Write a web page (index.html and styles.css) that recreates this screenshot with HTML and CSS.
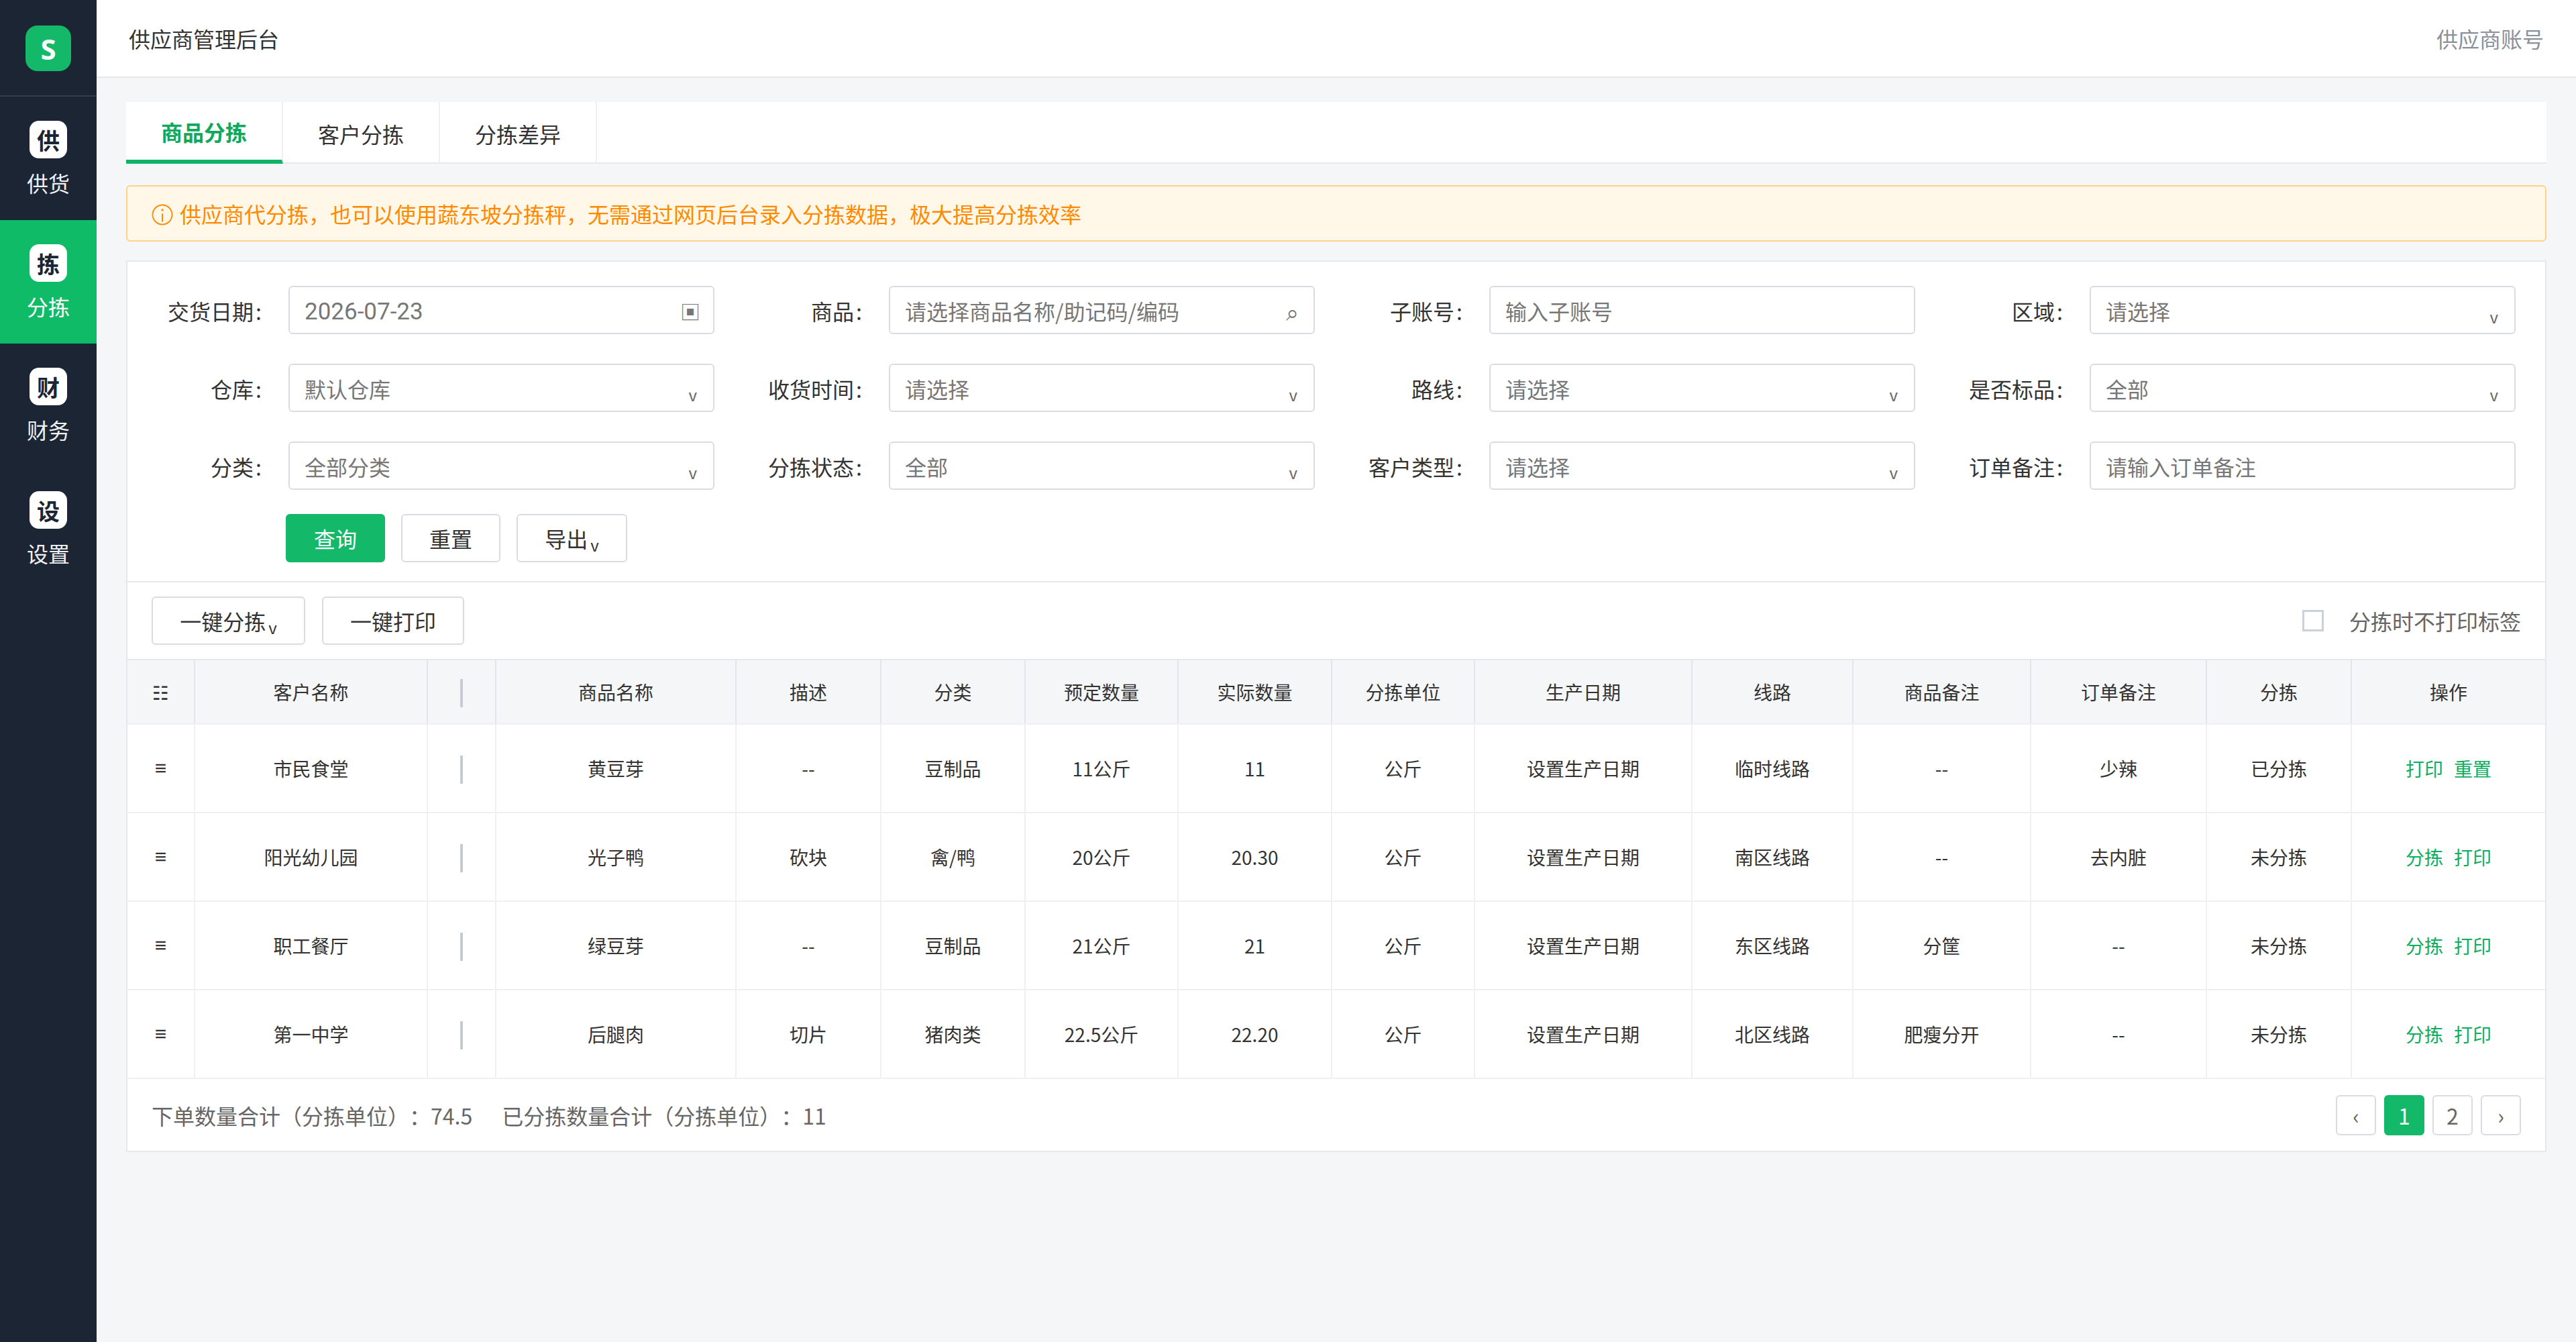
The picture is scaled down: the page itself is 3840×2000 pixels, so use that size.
FILE: index.html
```html
<!DOCTYPE html>
<html lang="zh-CN">
<head>
<meta charset="utf-8">
<title>供应商管理后台</title>
<link rel="stylesheet" href="styles.css">
</head>
<body>
<div class="app">
  <aside class="side">
    <div class="brand"><div class="logo">S</div></div>
    <a class="nav"><span class="nav-ic">供</span><span class="nav-t">供货</span></a>
    <a class="nav on"><span class="nav-ic">拣</span><span class="nav-t">分拣</span></a>
    <a class="nav"><span class="nav-ic">财</span><span class="nav-t">财务</span></a>
    <a class="nav"><span class="nav-ic">设</span><span class="nav-t">设置</span></a>
  </aside>
  <div class="main">
    <header class="top"><span class="top-t">供应商管理后台</span><span class="top-a">供应商账号</span></header>
    <div class="content">
      <nav class="tabs">
        <a class="tab on">商品分拣</a><a class="tab">客户分拣</a><a class="tab">分拣差异</a>
      </nav>
      <div class="alert">
        <svg class="ai" viewBox="0 0 32 32" width="32" height="32" aria-hidden="true">
          <circle cx="16" cy="16" r="14.5" fill="none" stroke="currentColor" stroke-width="1.8"/>
          <rect x="15" y="14.5" width="2" height="12" fill="currentColor"/>
          <rect x="14.6" y="7.5" width="2.8" height="3" fill="currentColor"/>
        </svg>
        <span>供应商代分拣，也可以使用蔬东坡分拣秤，无需通过网页后台录入分拣数据，极大提高分拣效率</span>
      </div>
      <section class="card">
        <div class="filters">
          <div class="grid">
            <label class="f"><span class="l">交货日期<span class="cl">:</span></span><span class="i"><span class="date">2026-07-23</span><span class="g-date">▣</span></span></label>
            <label class="f"><span class="l">商品<span class="cl">:</span></span><span class="i"><span>请选择商品名称/助记码/编码</span><span class="g-search">⌕</span></span></label>
            <label class="f"><span class="l">子账号<span class="cl">:</span></span><span class="i"><span>输入子账号</span></span></label>
            <label class="f"><span class="l">区域<span class="cl">:</span></span><span class="i"><span>请选择</span><span class="caret">v</span></span></label>
            <label class="f"><span class="l">仓库<span class="cl">:</span></span><span class="i"><span>默认仓库</span><span class="caret">v</span></span></label>
            <label class="f"><span class="l">收货时间<span class="cl">:</span></span><span class="i"><span>请选择</span><span class="caret">v</span></span></label>
            <label class="f"><span class="l">路线<span class="cl">:</span></span><span class="i"><span>请选择</span><span class="caret">v</span></span></label>
            <label class="f"><span class="l">是否标品<span class="cl">:</span></span><span class="i"><span>全部</span><span class="caret">v</span></span></label>
            <label class="f"><span class="l">分类<span class="cl">:</span></span><span class="i"><span>全部分类</span><span class="caret">v</span></span></label>
            <label class="f"><span class="l">分拣状态<span class="cl">:</span></span><span class="i"><span>全部</span><span class="caret">v</span></span></label>
            <label class="f"><span class="l">客户类型<span class="cl">:</span></span><span class="i"><span>请选择</span><span class="caret">v</span></span></label>
            <label class="f"><span class="l">订单备注<span class="cl">:</span></span><span class="i"><span>请输入订单备注</span></span></label>
          </div>
          <div class="acts">
            <button class="b pri w148">查询</button>
            <button class="b w148">重置</button>
            <button class="b w165">导出<span class="bc">v</span></button>
          </div>
        </div>
        <div class="bar">
          <div class="bar-l">
            <button class="b w229">一键分拣<span class="bc">v</span></button>
            <button class="b w212">一键打印</button>
          </div>
          <label class="chk"><span class="box"></span><span>分拣时不打印标签</span></label>
        </div>
        <table class="t">
          <colgroup>
            <col class="c1"><col class="c2"><col class="c3"><col class="c4"><col class="c5"><col class="c6"><col class="c7"><col class="c8"><col class="c9"><col class="c10"><col class="c11"><col class="c12"><col class="c13"><col class="c14"><col class="c15">
          </colgroup>
          <thead>
            <tr><th><span class="hd">☷</span></th><th>客户名称</th><th><span class="rs"></span></th><th>商品名称</th><th>描述</th><th>分类</th><th>预定数量</th><th>实际数量</th><th>分拣单位</th><th>生产日期</th><th>线路</th><th>商品备注</th><th>订单备注</th><th>分拣</th><th>操作</th></tr>
          </thead>
          <tbody>
            <tr><td><span class="dr">≡</span></td><td>市民食堂</td><td><span class="rs"></span></td><td>黄豆芽</td><td>--</td><td>豆制品</td><td>11公斤</td><td>11</td><td>公斤</td><td>设置生产日期</td><td>临时线路</td><td>--</td><td>少辣</td><td>已分拣</td><td class="op"><a>打印</a><a>重置</a></td></tr>
            <tr><td><span class="dr">≡</span></td><td>阳光幼儿园</td><td><span class="rs"></span></td><td>光子鸭</td><td>砍块</td><td>禽/鸭</td><td>20公斤</td><td>20.30</td><td>公斤</td><td>设置生产日期</td><td>南区线路</td><td>--</td><td>去内脏</td><td>未分拣</td><td class="op"><a>分拣</a><a>打印</a></td></tr>
            <tr><td><span class="dr">≡</span></td><td>职工餐厅</td><td><span class="rs"></span></td><td>绿豆芽</td><td>--</td><td>豆制品</td><td>21公斤</td><td>21</td><td>公斤</td><td>设置生产日期</td><td>东区线路</td><td>分筐</td><td>--</td><td>未分拣</td><td class="op"><a>分拣</a><a>打印</a></td></tr>
            <tr><td><span class="dr">≡</span></td><td>第一中学</td><td><span class="rs"></span></td><td>后腿肉</td><td>切片</td><td>猪肉类</td><td>22.5公斤</td><td>22.20</td><td>公斤</td><td>设置生产日期</td><td>北区线路</td><td>肥瘦分开</td><td>--</td><td>未分拣</td><td class="op"><a>分拣</a><a>打印</a></td></tr>
          </tbody>
        </table>
        <div class="foot">
          <div class="sum"><span>下单数量合计（分拣单位）：74.5</span><span>已分拣数量合计（分拣单位）：11</span></div>
          <div class="pg"><button class="p">‹</button><button class="p cur">1</button><button class="p">2</button><button class="p">›</button></div>
        </div>
      </section>
    </div>
  </div>
</div>
</body>
</html>
```

FILE: styles.css
```css
* { box-sizing: border-box; }
html, body { margin: 0; height: 100%; }
body { font-family: "Noto Sans CJK SC", "Noto Sans", sans-serif; font-size: 32px; color: #333; background: #f4f6f8; text-spacing-trim: space-all; }
.app { display: flex; height: 2000px; }
.side { width: 144px; flex: none; background: #1c2533; color: #fff; }
.brand { height: 144px; display: flex; justify-content: center; padding-top: 38px; border-bottom: 2px solid #343c49; }
.logo { width: 68px; height: 68px; border-radius: 18px; background: #13b869; color: #fff; font-family: "Noto Sans", sans-serif; font-size: 42px; font-weight: 700; display: flex; align-items: center; justify-content: center; }
.nav { height: 184px; display: flex; flex-direction: column; align-items: center; padding-top: 36px; color: #eef0f3; }
.nav.on { background: #10bb68; color: #fff; }
.nav-ic { width: 56px; height: 56px; border-radius: 14px; background: #fff; color: #1c2533; font-size: 34px; font-weight: 700; display: flex; align-items: center; justify-content: center; }
.nav-t { margin-top: 13px; line-height: 46px; }
.main { flex: 1; min-width: 0; display: flex; flex-direction: column; }
.top { height: 116px; flex: none; background: #fff; border-bottom: 2px solid #e6e8ec; display: flex; align-items: center; justify-content: space-between; padding: 0 48px; }
.top-a { color: #8b909a; }
.content { padding: 36px 44px; }
.tabs { display: flex; height: 92px; background: #fff; border-bottom: 2px solid #e6e8ec; }
.tab { width: 234px; height: 92px; padding-top: 4px; border-right: 2px solid #eef0f3; border-bottom: 2px solid #e6e8ec; display: flex; align-items: center; justify-content: center; }
.tab.on { color: #0fa95c; font-weight: 700; padding-top: 2px; border-bottom: 6px solid #10b365; }
.alert { margin-top: 32px; height: 84px; border: 2px solid #ffd28c; border-radius: 6px; background: #fff7e8; color: #ff8a00; padding: 0 34px 0 36px; display: flex; align-items: center; }
.ai { flex: none; margin: 4px 10px 0 0; }
.card { margin-top: 28px; background: #fff; border: 2px solid #e6e8ec; }
.filters { padding: 36px 44px 28px; border-bottom: 2px solid #e6e8ec; }
.grid { display: grid; grid-template-columns: repeat(4, 1fr); gap: 44px 64px; }
.f { display: flex; align-items: center; gap: 40px; }
.l { width: 156px; flex: none; text-align: right; white-space: nowrap; padding-top: 2px; }
.cl { margin-left: 3px; }
.i { flex: 1; min-width: 0; height: 72px; border: 2px solid #d9dde3; border-radius: 6px; padding: 2px 22px 0; color: #777; display: flex; align-items: center; justify-content: space-between; white-space: nowrap; }
.date { font-family: "Roboto", sans-serif; font-size: 35px; padding-top: 2px; }
.caret { font-size: 24px; align-self: flex-end; line-height: 1; padding-bottom: 12px; margin-right: 2px; color: #666; }
.g-date { font-size: 30px; color: #777; margin-right: -3px; }
.g-search { font-size: 34px; color: #777; }
.acts { display: flex; gap: 24px; margin-top: 36px; margin-left: 192px; }
.b { height: 72px; border: 2px solid #d9dde3; border-radius: 6px; background: #fff; color: #333; font: inherit; padding: 0; display: inline-flex; align-items: center; justify-content: center; }
.b.pri { background: #13b869; border-color: #13b869; color: #fff; }
.bc { font-size: 24px; align-self: flex-end; line-height: 1; padding-bottom: 12px; margin-left: 4px; }
.w148 { width: 148px; }
.w165 { width: 165px; }
.w229 { width: 229px; }
.w212 { width: 212px; }
.bar { height: 114px; padding: 0 36px; display: flex; align-items: center; justify-content: space-between; }
.bar-l { display: flex; gap: 25px; }
.chk { display: flex; align-items: center; gap: 38px; color: #666; }
.box { width: 32px; height: 32px; border: 3px solid #ccd1d8; background: #fff; }
.t { width: 100%; table-layout: fixed; border-collapse: collapse; font-size: 28px; text-align: center; }
.t th, .t td { padding: 0; border: 2px solid #eef0f3; border-top: 0; }
.t th:first-child, .t td:first-child { border-left: 0; }
.t th:last-child, .t td:last-child { border-right: 0; }
.t thead tr { height: 96px; background: #f4f6f8; border-top: 2px solid #e6e8ec; border-bottom: 2px solid #e6e8ec; }
.t th { font-weight: 400; border-right-color: #e2e5e9; border-left-color: #e2e5e9; }
.t tbody tr { height: 132px; border-bottom: 2px solid #e6e8ec; }
.c1 { width: 100px; } .c2 { width: 347px; } .c3 { width: 102px; } .c4 { width: 358px; } .c5 { width: 216px; }
.c6 { width: 215px; } .c7 { width: 228px; } .c8 { width: 229px; } .c9 { width: 213px; } .c10 { width: 324px; }
.c11 { width: 240px; } .c12 { width: 265px; } .c13 { width: 262px; } .c14 { width: 216px; } .c15 { width: 289px; }
.rs { display: inline-block; width: 4px; height: 42px; background: #c6cbd3; vertical-align: middle; }
.hd { font-family: "DejaVu Sans", sans-serif; font-size: 28px; }
.dr { font-family: "Liberation Sans", sans-serif; font-weight: 700; font-size: 30px; vertical-align: 2px; }
.op { color: #0fae5f; }
.op a + a { margin-left: 16px; }
.foot { height: 107px; padding: 0 36px; display: flex; align-items: center; justify-content: space-between; color: #666; }
.sum { display: flex; gap: 44px; }
.pg { display: flex; gap: 12px; }
.p { width: 60px; height: 60px; border: 2px solid #d9dde3; border-radius: 6px; background: #fff; color: #666; font: inherit; padding: 0; }
.p.cur { background: #13b869; border-color: #13b869; color: #fff; }
```
